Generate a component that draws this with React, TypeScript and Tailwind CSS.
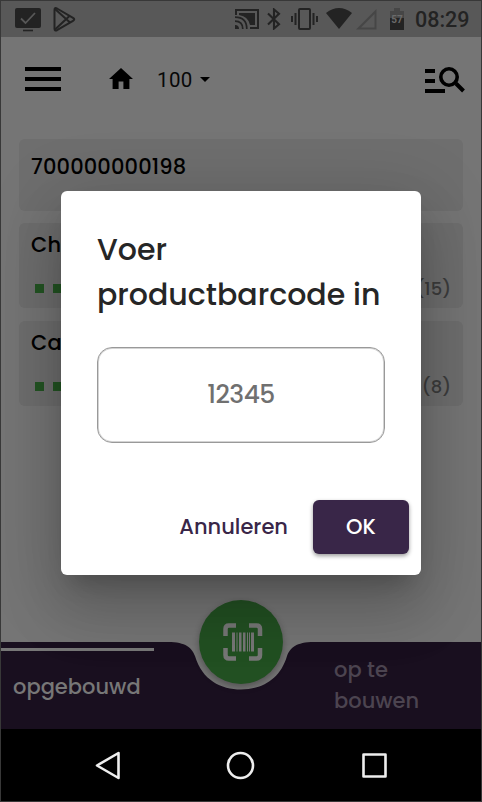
import type { ReactNode } from 'react';

const FONT = "font-[Poppins,Inter,'Liberation_Sans',sans-serif] [font-feature-settings:'cv11']";

function StatusBar() {
  return (
    <div className="flex h-9 shrink-0 items-center bg-[#585858] pl-[14px] pr-[12px] text-[#232323]">
      <svg width="26" height="24" viewBox="0 0 26 24" className="mt-px">
        <rect x="0" y="0" width="26" height="20" rx="2" fill="currentColor" />
        <path d="M8 22.5h10" stroke="currentColor" strokeWidth="1.6" />
        <path d="M6 10.5l4.5 4.5L20 5" fill="none" stroke="#585858" strokeWidth="1.8" />
      </svg>
      <svg width="23" height="25" viewBox="0 0 23 25" className="ml-[12px]" fill="none" stroke="currentColor" strokeWidth="2" strokeLinejoin="round">
        <path d="M1.5 3Q1.5 .2 4 1.5L20 10.8Q22.5 12.3 20 13.8L4 23.2Q1.5 24.2 1.5 21.7Z" />
        <path d="M2 2l15 13.500M2 22.5L16.500 9" />
      </svg>
      <div className="flex-1" />
      <svg width="24" height="20" viewBox="0 0 24 20" fill="currentColor">
        <path d="M1 6V1h22v18h-8" fill="none" stroke="currentColor" strokeWidth="2" />
        <path d="M4 4h16v12h-5Q13.500 7.500 4 6z" />
        <path d="M0 16q4 0 4 4H0z" />
        <path d="M0 12.200q7.800 0 7.800 7.800M0 8.200q11.800 0 11.800 11.800" fill="none" stroke="currentColor" strokeWidth="1.700" />
      </svg>
      <svg width="14" height="22" viewBox="0 0 14 22" className="ml-[8px]" fill="none" stroke="currentColor" strokeWidth="2.100">
        <path d="M1 5.500l11 10.700L7 20.500V1.500l5 4.300L1 16.500" />
      </svg>
      <svg width="27" height="22" viewBox="0 0 27 22" className="ml-[10px]" fill="none" stroke="currentColor" strokeWidth="2">
        <rect x="8" y="1" width="11" height="20" rx="1" />
        <path d="M4.500 5v12M1 8v6M22.500 5v12M26 8v6" />
      </svg>
      <svg width="26" height="21" viewBox="0 0 26 21" className="mt-[-1px] ml-[8px]">
        <path d="M0 5Q13-5 26 5L13 21Z" fill="currentColor" />
      </svg>
      <svg width="21" height="21" viewBox="0 0 21 21" className="ml-[4px]">
        <path d="M2.500 19.500L19.500 2.500v17Z" fill="none" stroke="#464646" strokeWidth="2" />
      </svg>
      <svg width="14" height="22" viewBox="0 0 14 22" className="mb-px ml-[13px]">
        <path d="M0 3h4V0h6v3h4v7H0z" fill="#464646" />
        <path d="M0 10h14v12H0z" fill="currentColor" />
        <text x="7" y="15" textAnchor="middle" fontFamily="Roboto" fontSize="10" fontWeight="700" fill="#6a6a6a">57</text>
      </svg>
      <span className="ml-[11px] mt-[2px] w-[54px] whitespace-nowrap font-[Roboto,sans-serif] text-[21.500px] font-medium leading-6">08:29</span>
    </div>
  );
}

function Toolbar() {
  return (
    <header className="flex h-[84px] shrink-0 items-center pl-6 pr-4">
      <div className="flex w-9 flex-col gap-[6px]">
        <div className="h-1 bg-black" />
        <div className="h-1 bg-black" />
        <div className="h-1 bg-black" />
      </div>
      <svg width="24" height="21" viewBox="2 3 20 17" className="mb-px ml-12" preserveAspectRatio="none">
        <path d="M10 20v-6h4v6h5v-8h3L12 3 2 12h3v8z" />
      </svg>
      <span className="ml-6 mt-px w-[34.500px] font-[Roboto,sans-serif] text-[20.500px] leading-6 tracking-[0.4px] text-[#080808]">100</span>
      <svg width="10" height="5" viewBox="0 0 10 5" className="ml-[8px]">
        <path d="M0 0h10L5 5z" />
      </svg>
      <div className="flex-1" />
      <svg width="40" height="26" viewBox="0 0 40 26" className="mt-[2px]" fill="none" stroke="black" strokeWidth="4">
        <path d="M0 4h10M0 14h10M0 24h20M31 16.500l7.500 7.500" />
        <circle cx="24" cy="10" r="8.200" strokeWidth="3.600" />
      </svg>
    </header>
  );
}

function Card({ title, count }: { title: ReactNode; count?: string }) {
  return (
    <section className={`flex flex-col rounded-md bg-[#6e6e6e] px-3 ${count ? 'h-[85px] pt-[6px]' : 'h-[72px] pt-[12px]'}`}>
      <h2 className="text-[21px] font-medium leading-[32px] tracking-[0.15px] text-black">{title}</h2>
      {count && (
        <div className="mt-[12px] flex items-center justify-between">
          <div className="flex gap-[9px] pl-[4px]">
            <i className="size-[9px] bg-[#235423]" />
            <i className="size-[9px] bg-[#235423]" />
          </div>
          <span className="pt-px text-[18px] font-medium leading-[30px] text-[#3c3c3c]">{count}</span>
        </div>
      )}
    </section>
  );
}

function ScanButton() {
  return (
    <button className="absolute left-[198px] top-[-42px] flex size-[84px] items-center justify-center rounded-full bg-[#225022] shadow-[0_3px_7px_rgba(0,0,0,0.3)]">
      <svg width="40" height="38" viewBox="0 0 40 38" className="ml-[3px] mt-[-1px]">
        <g fill="none" stroke="#777" strokeWidth="4.500">
          <path d="M2.500 13V6Q2.500 2.500 6 2.500H13M26 2.500h7.500Q37 2.500 37 6v7M37 25v7q0 3.500-3.500 3.500H26M13 35.500H6Q2.500 35.500 2.500 32v-7" />
        </g>
        <g fill="#777">
          <path d="M9 9.500h3v19H9zM13.500 9.500h1v19h-1zM16 9.500h2.500v19H16zM20 9.500h2.500v19H20zM24 9.500h1v19h-1zM26 9.500h1v19h-1zM28 9.500h3v19h-3z" />
        </g>
      </svg>
    </button>
  );
}

function Tabs() {
  return (
    <div className="relative h-[87px] shrink-0">
      <svg width="480" height="87" viewBox="0 0 480 87" className="absolute inset-0">
        <path d="M0 0H167C185 0 191 6 194 14C201 38 220 47.500 240 47.500C260 47.500 279 38 286 14C289 6 295 0 313 0H480V87H0Z" fill="#190f1f" />
      </svg>
      <div className="relative flex h-full justify-between">
        <div className="w-[153px] pt-[6px]">
          <div className="h-[3px] bg-[#777]" />
          <p className="pl-3 pt-[20px] text-[21px] font-medium leading-[31px] text-[#777]">opgebouwd</p>
        </div>
        <p className="w-[147px] pt-[12px] text-[21px] font-medium leading-[31px] text-[#4c4450]">
          op te<br />bouwen
        </p>
      </div>
      <ScanButton />
    </div>
  );
}

function NavBar() {
  return (
    <nav className="relative flex h-[72px] shrink-0 items-center bg-black pl-[93px]">
      <svg width="28" height="30" viewBox="0 0 28 30" fill="none" stroke="#eee" strokeWidth="2.600" strokeLinejoin="round">
        <path d="M3 15.500L24.500 3v25Z" />
      </svg>
      <svg width="30" height="30" viewBox="0 0 30 30" className="ml-[103px]" fill="none" stroke="#eee" strokeWidth="2.600">
        <circle cx="15.500" cy="15.500" r="12.500" />
      </svg>
      <svg width="28" height="30" viewBox="0 0 28 30" className="ml-[105px]" fill="none" stroke="#eee" strokeWidth="2.600" strokeLinejoin="round">
        <rect x="3.500" y="4.500" width="22" height="22" />
      </svg>
    </nav>
  );
}

function Dialog() {
  return (
    <div className="absolute left-[60px] top-[190px] flex h-[384px] w-[360px] flex-col rounded-md bg-white px-9 pt-9 shadow-[0_16px_22px_-10px_rgba(0,0,0,0.2),0_36px_57px_4px_rgba(0,0,0,0.14),0_14px_69px_12px_rgba(0,0,0,0.12)]">
      <h1 className="whitespace-nowrap text-[30px] font-medium leading-[45px] text-[#262626]">
        Voer<br />productbarcode in
      </h1>
      <div className="mt-[30px] flex h-24 shrink-0 items-center justify-center rounded-[15px] border border-[#999] text-[25px] font-medium text-[#707070] shadow-[inset_0_0_0_1px_#d4d4d4]">
        <span className="mt-[-1px] tracking-[-0.5px]">12345</span>
      </div>
      <div className="-mr-6 mt-[57px] flex items-center justify-end gap-[25px] text-[21px] font-medium">
        <button className="text-[#392648]">Annuleren</button>
        <button className="h-[54px] w-24 rounded-md bg-[#392648] text-white shadow-[0_2px_4px_rgba(0,0,0,0.4)]">OK</button>
      </div>
    </div>
  );
}

export default function App() {
  return (
    <div className={`relative flex h-[802px] w-[482px] flex-col overflow-hidden border border-[#383838] bg-[#757575] ${FONT}`}>
      <StatusBar />
      <Toolbar />
      <main className="flex flex-1 flex-col gap-[12px] px-[18px] pt-[18px]">
        <Card title="700000000198" />
        <Card title="Ch" count="(15)" />
        <div className="h-px shrink-0 -mb-[12px]" />
        <Card title="Ca" count="(8)" />
      </main>
      <Tabs />
      <Dialog />
      <NavBar />
    </div>
  );
}
